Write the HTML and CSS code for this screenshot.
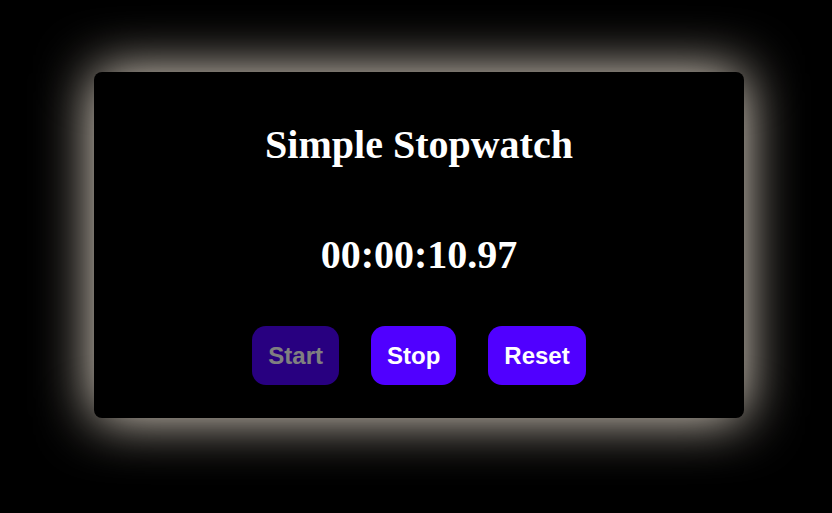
FILE: index.html
```html
<!DOCTYPE html>
<html>
<head>
<meta charset="utf-8">
<link rel="stylesheet" href="styles.css">
</head>
<body>
<div class="stage">
  <main class="card">
    <h1 class="title">Simple Stopwatch</h1>
    <div class="time">00:00:10.97</div>
    <div class="controls">
      <button class="btn" disabled>Start</button>
      <button class="btn">Stop</button>
      <button class="btn">Reset</button>
    </div>
  </main>
</div>
</body>
</html>
```

FILE: styles.css
```css
html, body {
  margin: 0;
  padding: 0;
  background: #000;
}
.stage {
  min-height: 513px;
  box-sizing: border-box;
  padding: 72px 0 0 94px;
}
.card {
  width: 650px;
  height: 346px;
  box-sizing: border-box;
  background: #000;
  border-radius: 8px;
  box-shadow: 0 0 55px 0 #f3e8d9;
  display: flex;
  flex-direction: column;
  align-items: center;
  padding-top: 50px;
  font-family: "Liberation Serif", "Times New Roman", serif;
  color: #fff;
}
.title {
  margin: 0;
  font-size: 40px;
  font-weight: bold;
  line-height: 46px;
}
.time {
  margin-top: 64px;
  font-size: 40px;
  font-weight: bold;
  line-height: 46px;
}
.controls {
  margin-top: 48px;
  display: flex;
  gap: 32px;
}
.btn {
  font-family: "Liberation Sans", Arial, sans-serif;
  font-size: 24px;
  font-weight: bold;
  color: #fff;
  background: #5000ff;
  border: none;
  border-radius: 14px;
  padding: 16px 16px;
  line-height: 27px;
  cursor: pointer;
}
.btn:disabled {
  opacity: 0.5;
  cursor: default;
}
```
